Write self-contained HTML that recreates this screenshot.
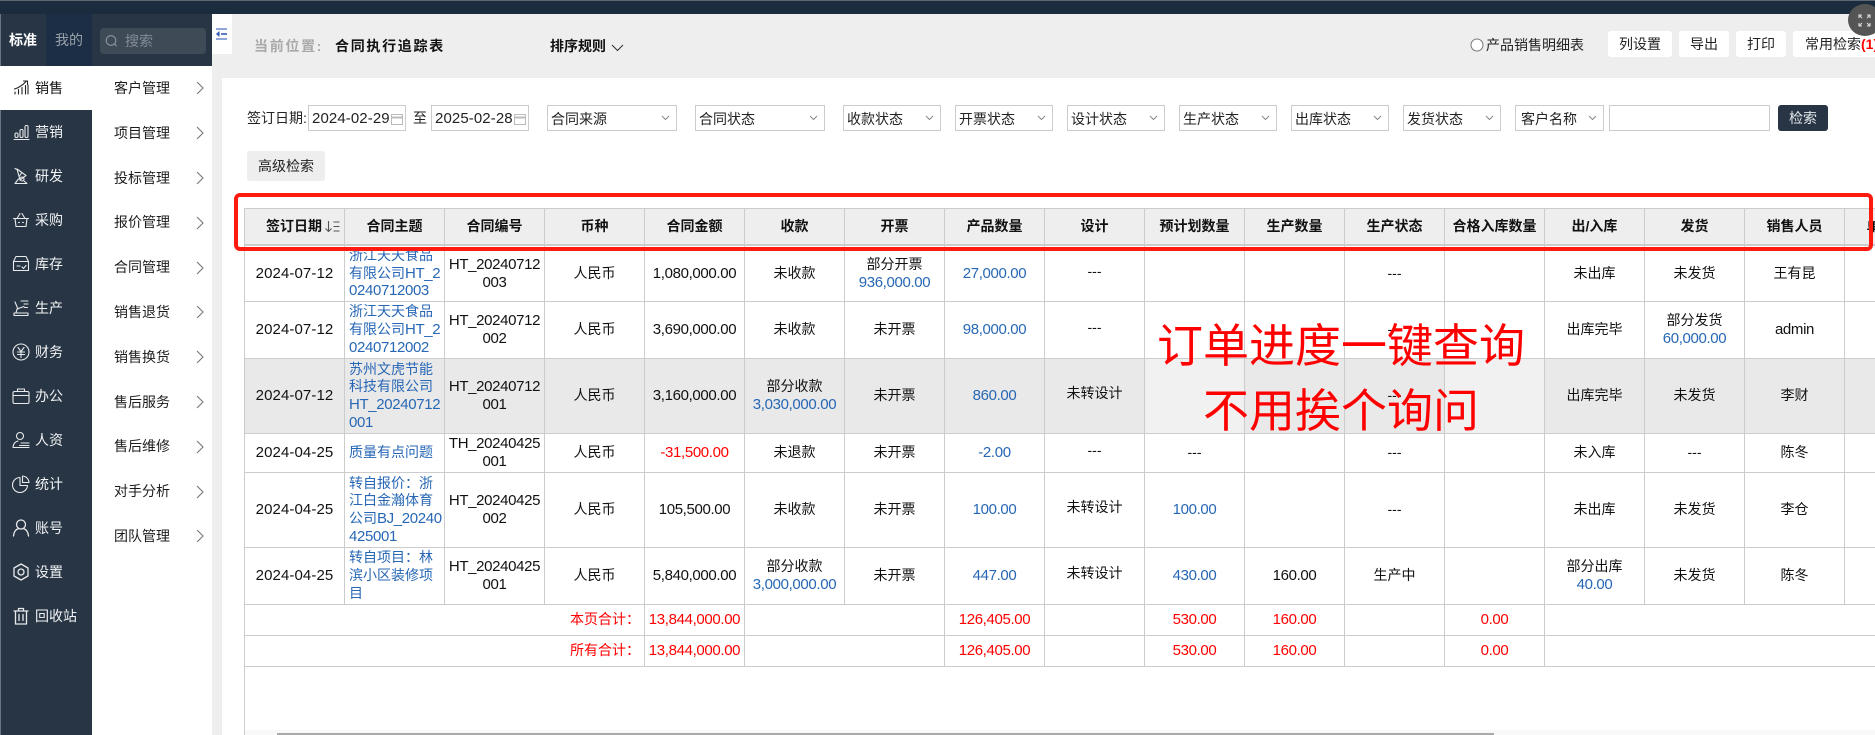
<!DOCTYPE html>
<html lang="zh"><head><meta charset="utf-8"><title>合同执行追踪表</title>
<style>
*{box-sizing:border-box;margin:0;padding:0}
html,body{width:1875px;height:735px;overflow:hidden;background:#fff}
body{position:relative;font:14px/18px "Liberation Sans","Noto Sans CJK SC",sans-serif;color:#111}
.a{position:absolute;white-space:nowrap}
.nav{position:absolute;left:35px;color:#f0f2f4;line-height:20px}
.ic{position:absolute;left:12px;width:18px;height:18px;fill:none;stroke:#e8eaec;stroke-width:1.1;stroke-linecap:round;stroke-linejoin:round}
.sub{position:absolute;left:114px;line-height:20px;color:#1c1c1c}
.chev{position:absolute;left:196px;width:8px;height:14px;fill:none;stroke:#777;stroke-width:1.1}
.box{position:absolute;top:105px;height:26px;background:#fff;border:1px solid #ccc;line-height:26px;padding-left:3px;white-space:nowrap;color:#222}
.box svg{position:absolute;right:6px;top:9px;width:9px;height:6px;fill:none;stroke:#888;stroke-width:1}
.btn{position:absolute;top:31px;height:26px;background:#fff;border-radius:3px;text-align:center;line-height:26px;color:#222;white-space:nowrap}
.d{font-size:15px;letter-spacing:.1px}.n{font-size:15px;letter-spacing:-.35px}
table{position:absolute;left:245px;top:209px;width:1700px;table-layout:fixed;border-collapse:separate;border-spacing:0}
col{width:100px}
th,td{border-right:1px solid #ccc;border-bottom:1px solid #ccc;text-align:center;vertical-align:middle;white-space:nowrap;padding:0;line-height:17.67px;overflow:hidden}
th{background:#eee;font-weight:700;border-bottom:2px solid #ccc;color:#111}
td.l{text-align:left;padding-left:4px}
.u{position:relative;top:-2px}
.b{color:#2767b5}.r{color:#f00}
tr.g td{background:#e9e9e9}tr.g td.w{background:#f1f1f1}
td.t{text-align:right;padding-right:4px;color:#f00}
</style></head><body>

<div class="a" style="left:0;top:0;width:1875px;height:14px;background:#1b2c3e;border-top:1px solid #5d6873"></div>
<div class="a" style="left:212px;top:14px;width:1663px;height:721px;background:#eee"></div>
<div class="a" style="left:222px;top:78px;width:1653px;height:657px;background:#fff"></div>

<!-- left rail -->
<div class="a" style="left:0;top:14px;width:92px;height:721px;background:#283544;border-left:1px solid #6b7580"></div>
<div class="a" style="left:92px;top:14px;width:120px;height:721px;background:#fff"></div>
<div class="a" style="left:0;top:14px;width:212px;height:52px;background:#283544;border-left:1px solid #6b7580"></div>
<div class="a" style="left:46px;top:14px;width:46px;height:52px;background:#1b2e45"></div>
<div class="a" style="left:9px;top:31px;color:#fff;font-weight:700">标准</div>
<div class="a" style="left:55px;top:31px;color:#9aa1a8">我的</div>
<div class="a" style="left:100px;top:28px;width:106px;height:26px;background:#3f4a57;border-radius:4px"></div>
<svg class="a" style="left:105px;top:34px;width:13px;height:14px;fill:none;stroke:#8d959e;stroke-width:1.1" viewBox="0 0 13 14"><circle cx="6" cy="6.5" r="4.8"/><path d="M9.6 10.2l2 2"/></svg>
<div class="a" style="left:125px;top:32px;color:#838c96">搜索</div>
<div class="a" style="left:0;top:66px;width:92px;height:44px;background:#fff"></div>

<!-- nav -->
<svg class="ic" style="top:79px;stroke:#222" viewBox="0 0 18 18"><path d="M3 15v-2M6.5 15v-4.5M10 15V8.5M13.500 15V6.500M16 15V6M2.500 10Q9 8 14 2.500M11.500 2h4v3.500"/></svg>
<div class="nav" style="top:78px;color:#111">销售</div>
<svg class="ic" style="top:123px" viewBox="0 0 18 18"><path d="M2 16.500h15"/><rect x="3" y="10" width="3" height="4.500" rx="1.200"/><rect x="8" y="6.500" width="3" height="8" rx="1.200"/><rect x="13" y="2.500" width="3" height="12" rx="1.200"/></svg>
<div class="nav" style="top:122px">营销</div>
<svg class="ic" style="top:167px" viewBox="0 0 18 18"><path d="M5 2l9 6.500-6 4.500zM9.500 6l-2 3M6 3L3 1.500M6.500 12L3 16.500h12l-3-2.500"/><circle cx="10" cy="12" r="2"/></svg>
<div class="nav" style="top:166px">研发</div>
<svg class="ic" style="top:211px" viewBox="0 0 18 18"><path d="M1.500 7.500h15M3 7.500l1 8h10l1-8M5 7.500L8 2.500M13 7.500L10 2.500M6.500 11.500h1M10.500 11.500h1"/></svg>
<div class="nav" style="top:210px">采购</div>
<svg class="ic" style="top:255px" viewBox="0 0 18 18"><path d="M4 1.500h10l2.500 5v9h-15v-9zM1.500 6.500h15M5 11h3M10 12l1.500 1.500L14 10.500"/></svg>
<div class="nav" style="top:254px">库存</div>
<svg class="ic" style="top:299px" viewBox="0 0 18 18"><path d="M2 16.500h14v-2.500H2zM4 14l1-4 7-2.500M3 3l3 7M9 2h7M12 5h4M12.500 8.500h3"/></svg>
<div class="nav" style="top:298px">生产</div>
<svg class="ic" style="top:343px" viewBox="0 0 18 18"><circle cx="9" cy="9" r="8"/><path d="M6 4.500L9 8.500l3-4M5.500 9h7M5.500 11.500h7M9 8.500V14.500"/></svg>
<div class="nav" style="top:342px">财务</div>
<svg class="ic" style="top:387px" viewBox="0 0 18 18"><rect x="1" y="4.500" width="16" height="12" rx="1.500"/><path d="M5.500 4.500V2h7v2.500M1 8.500h16"/></svg>
<div class="nav" style="top:386px">办公</div>
<svg class="ic" style="top:431px" viewBox="0 0 18 18"><circle cx="8" cy="5" r="3.500"/><path d="M1 16.500q.5-5.500 5-6.500M9 12h8M7.500 14.500h9.500M1 16.500h16"/></svg>
<div class="nav" style="top:430px">人资</div>
<svg class="ic" style="top:475px" viewBox="0 0 18 18"><path d="M8 2.500a7.500 7.500 0 1 0 7.500 8H8zM10.500 1a7 7 0 0 1 6.500 6.500h-6.500z"/></svg>
<div class="nav" style="top:474px">统计</div>
<svg class="ic" style="top:519px;stroke-width:1.300" viewBox="0 0 18 18"><circle cx="9" cy="5.500" r="4.500"/><path d="M1.500 17q.5-6 5-7.500M16.500 17q-.5-6-5-7.500"/></svg>
<div class="nav" style="top:518px">账号</div>
<svg class="ic" style="top:563px;stroke-width:1.300" viewBox="0 0 18 18"><path d="M9 1l7 4v8l-7 4-7-4V5z"/><circle cx="9" cy="9" r="3"/></svg>
<div class="nav" style="top:562px">设置</div>
<svg class="ic" style="top:607px;stroke-width:1.300" viewBox="0 0 18 18"><path d="M2 4h14M6.500 4V1.500h5V4M3.500 4v13h11V4M7 7.500v6M11 7.500v6"/></svg>
<div class="nav" style="top:606px">回收站</div>

<!-- sub menu -->
<div class="sub" style="top:78px">客户管理</div>
<div class="sub" style="top:123px">项目管理</div>
<div class="sub" style="top:168px">投标管理</div>
<div class="sub" style="top:212px">报价管理</div>
<div class="sub" style="top:257px">合同管理</div>
<div class="sub" style="top:302px">销售退货</div>
<div class="sub" style="top:347px">销售换货</div>
<div class="sub" style="top:392px">售后服务</div>
<div class="sub" style="top:436px">售后维修</div>
<div class="sub" style="top:481px">对手分析</div>
<div class="sub" style="top:526px">团队管理</div>
<svg class="chev" style="top:81px" viewBox="0 0 8 14"><path d="M1 1l6 6-6 6"/></svg>
<svg class="chev" style="top:126px" viewBox="0 0 8 14"><path d="M1 1l6 6-6 6"/></svg>
<svg class="chev" style="top:171px" viewBox="0 0 8 14"><path d="M1 1l6 6-6 6"/></svg>
<svg class="chev" style="top:216px" viewBox="0 0 8 14"><path d="M1 1l6 6-6 6"/></svg>
<svg class="chev" style="top:261px" viewBox="0 0 8 14"><path d="M1 1l6 6-6 6"/></svg>
<svg class="chev" style="top:305px" viewBox="0 0 8 14"><path d="M1 1l6 6-6 6"/></svg>
<svg class="chev" style="top:350px" viewBox="0 0 8 14"><path d="M1 1l6 6-6 6"/></svg>
<svg class="chev" style="top:395px" viewBox="0 0 8 14"><path d="M1 1l6 6-6 6"/></svg>
<svg class="chev" style="top:440px" viewBox="0 0 8 14"><path d="M1 1l6 6-6 6"/></svg>
<svg class="chev" style="top:485px" viewBox="0 0 8 14"><path d="M1 1l6 6-6 6"/></svg>
<svg class="chev" style="top:529px" viewBox="0 0 8 14"><path d="M1 1l6 6-6 6"/></svg>

<!-- collapse -->
<div class="a" style="left:212px;top:14px;width:20px;height:40px;background:#fff"></div>
<svg class="a" style="left:216px;top:28px;width:12px;height:12px" viewBox="0 0 12 12"><rect x="0" y="0" width="11" height="2" fill="#8ea6d8"/><rect x="0" y="10" width="11" height="2" fill="#8ea6d8"/><rect x="5" y="5" width="6" height="2" fill="#5d7fc6"/><path d="M0 6l3.500-3v6z" fill="#2d58b0"/></svg>

<!-- header bar -->
<div class="a" style="left:254px;top:37px;color:#a9a9a9;font-weight:700;letter-spacing:1.700px">当前位置:</div>
<div class="a" style="left:335px;top:37px;color:#111;font-weight:700;letter-spacing:1.700px">合同执行追踪表</div>
<div class="a" style="left:550px;top:37px;color:#111;font-weight:700">排序规则</div>
<svg class="a" style="left:611px;top:44px;width:13px;height:8px;fill:none;stroke:#333;stroke-width:1.100" viewBox="0 0 13 8"><path d="M1 1l5.500 5.500L12 1"/></svg>
<svg class="a" style="left:1470px;top:38px;width:14px;height:14px" viewBox="0 0 14 14"><circle cx="7" cy="7" r="6" fill="#fff" stroke="#777"/></svg>
<div class="a" style="left:1486px;top:36px;color:#222">产品销售明细表</div>
<div class="btn" style="left:1608px;width:64px">列设置</div>
<div class="btn" style="left:1679px;width:50px">导出</div>
<div class="btn" style="left:1736px;width:50px">打印</div>
<div class="btn" style="left:1793px;width:90px;text-align:left;padding-left:12px">常用检索<span style="color:#f00;font-weight:700">(1)</span></div>
<div class="a" style="left:1848px;top:4px;width:34px;height:32px;background:#555;border-radius:50%"></div>
<svg class="a" style="left:1858px;top:14px;width:13px;height:13px;fill:none;stroke:#ddd;stroke-width:1.100" viewBox="0 0 13 13"><path d="M1 4V1h3M1 1l3 3M12 4V1H9M12 1L9 4M1 9v3h3M1 12l3-3M12 9v3H9M12 12L9 9"/></svg>

<!-- filters -->
<div class="a" style="left:247px;top:109px;color:#222">签订日期:</div>
<div class="box" style="left:308px;width:98px;line-height:24px"><span class="d">2024-02-29</span>
<svg style="right:2px;top:7px;width:12px;height:12px;stroke:#bbb" viewBox="0 0 12 12"><rect x=".5" y="1.500" width="11" height="10"/><path d="M.5 4.500h11" stroke-width="2"/></svg></div>
<div class="a" style="left:413px;top:109px;color:#222">至</div>
<div class="box" style="left:431px;width:98px;line-height:24px"><span class="d">2025-02-28</span>
<svg style="right:2px;top:7px;width:12px;height:12px;stroke:#bbb" viewBox="0 0 12 12"><rect x=".5" y="1.500" width="11" height="10"/><path d="M.5 4.500h11" stroke-width="2"/></svg></div>
<div class="box" style="left:547px;width:130px">合同来源<svg viewBox="0 0 9 6"><path d="M1 1l3.500 3.500L8 1"/></svg></div>
<div class="box" style="left:695px;width:130px">合同状态<svg viewBox="0 0 9 6"><path d="M1 1l3.500 3.500L8 1"/></svg></div>
<div class="box" style="left:843px;width:98px">收款状态<svg viewBox="0 0 9 6"><path d="M1 1l3.500 3.500L8 1"/></svg></div>
<div class="box" style="left:955px;width:98px">开票状态<svg viewBox="0 0 9 6"><path d="M1 1l3.500 3.500L8 1"/></svg></div>
<div class="box" style="left:1067px;width:98px">设计状态<svg viewBox="0 0 9 6"><path d="M1 1l3.500 3.500L8 1"/></svg></div>
<div class="box" style="left:1179px;width:98px">生产状态<svg viewBox="0 0 9 6"><path d="M1 1l3.500 3.500L8 1"/></svg></div>
<div class="box" style="left:1291px;width:98px">出库状态<svg viewBox="0 0 9 6"><path d="M1 1l3.500 3.500L8 1"/></svg></div>
<div class="box" style="left:1403px;width:98px">发货状态<svg viewBox="0 0 9 6"><path d="M1 1l3.500 3.500L8 1"/></svg></div>
<div class="box" style="left:1515px;width:89px;padding-left:5px">客户名称<svg viewBox="0 0 9 6"><path d="M1 1l3.500 3.500L8 1"/></svg></div>
<div class="box" style="left:1609px;width:161px"></div>
<div class="a" style="left:1778px;top:105px;width:50px;height:26px;background:#283544;color:#e4e8ec;border-radius:3px;text-align:center;line-height:26px">检索</div>
<div class="a" style="left:247px;top:151px;width:78px;height:30px;background:#eee;border-radius:3px;text-align:center;line-height:30px;color:#222">高级检索</div>

<!-- table -->
<div class="a" style="left:244px;top:208px;width:1px;height:527px;background:#ccc"></div>
<div class="a" style="left:244px;top:208px;width:1631px;height:1px;background:#ccc"></div>
<table>
<colgroup><col><col><col><col><col><col><col><col><col><col><col><col><col><col><col><col><col></colgroup>
<tr style="height:37px">
<th style="text-align:left;padding-left:21px">签订日期<svg style="vertical-align:-2px;margin-left:2px" width="16" height="13" viewBox="0 0 16 13" fill="none" stroke="#555" stroke-width="1.100"><path d="M4.500 1v10.500M1.500 8.500l3 3 3-3M9.500 2h6M9.500 6.500h6M9.500 11h6"/></svg></th>
<th>合同主题</th><th>合同编号</th><th>币种</th><th>合同金额</th><th>收款</th><th>开票</th><th>产品数量</th><th>设计</th><th>预计划数量</th><th>生产数量</th><th>生产状态</th><th>合格入库数量</th><th>出/入库</th><th>发货</th><th>销售人员</th><th>单据状态</th></tr>

<tr style="height:56px">
<td><span class="d">2024-07-12</span></td>
<td class="l b">浙江天天食品<br>有限公司<span class="n">HT_2</span><br><span class="n">0240712003</span></td>
<td><span class="n">HT_20240712<br>003</span></td><td>人民币</td><td><span class="n">1,080,000.00</span></td><td>未收款</td>
<td>部分开票<br><span class="n b">936,000.00</span></td><td><span class="n b">27,000.00</span></td><td><span class="u">---</span></td><td></td><td></td><td>---</td><td></td><td>未出库</td><td>未发货</td><td>王有昆</td><td></td></tr>

<tr style="height:57px">
<td><span class="d">2024-07-12</span></td>
<td class="l b">浙江天天食品<br>有限公司<span class="n">HT_2</span><br><span class="n">0240712002</span></td>
<td><span class="n">HT_20240712<br>002</span></td><td>人民币</td><td><span class="n">3,690,000.00</span></td><td>未收款</td>
<td>未开票</td><td><span class="n b">98,000.00</span></td><td><span class="u">---</span></td><td></td><td></td><td>---</td><td></td><td>出库完毕</td><td>部分发货<br><span class="n b">60,000.00</span></td><td><span class="n">admin</span></td><td></td></tr>

<tr class="g" style="height:75px">
<td><span class="d">2024-07-12</span></td>
<td class="l b">苏州文虎节能<br>科技有限公司<br><span class="n">HT_20240712<br>001</span></td>
<td><span class="n">HT_20240712<br>001</span></td><td>人民币</td><td><span class="n">3,160,000.00</span></td><td>部分收款<br><span class="n b">3,030,000.00</span></td>
<td>未开票</td><td><span class="n b">860.00</span></td><td><span class="u">未转设计</span></td><td class="w"></td><td></td><td>---</td><td class="w"></td><td>出库完毕</td><td>未发货</td><td>李财</td><td></td></tr>

<tr style="height:39px">
<td><span class="d">2024-04-25</span></td>
<td class="l b">质量有点问题</td>
<td><span class="n">TH_20240425<br>001</span></td><td>人民币</td><td><span class="n r">-31,500.00</span></td><td>未退款</td>
<td>未开票</td><td><span class="n b">-2.00</span></td><td><span class="u">---</span></td><td>---</td><td></td><td>---</td><td></td><td>未入库</td><td>---</td><td>陈冬</td><td></td></tr>

<tr style="height:75px">
<td><span class="d">2024-04-25</span></td>
<td class="l b">转自报价：浙<br>江白金瀚体育<br>公司<span class="n">BJ_20240<br>425001</span></td>
<td><span class="n">HT_20240425<br>002</span></td><td>人民币</td><td><span class="n">105,500.00</span></td><td>未收款</td>
<td>未开票</td><td><span class="n b">100.00</span></td><td><span class="u">未转设计</span></td><td><span class="n b">100.00</span></td><td></td><td>---</td><td></td><td>未出库</td><td>未发货</td><td>李仓</td><td></td></tr>

<tr style="height:57px">
<td><span class="d">2024-04-25</span></td>
<td class="l b">转自项目：林<br>滨小区装修项<br>目</td>
<td><span class="n">HT_20240425<br>001</span></td><td>人民币</td><td><span class="n">5,840,000.00</span></td><td>部分收款<br><span class="n b">3,000,000.00</span></td>
<td>未开票</td><td><span class="n b">447.00</span></td><td><span class="u">未转设计</span></td><td><span class="n b">430.00</span></td><td><span class="n">160.00</span></td><td>生产中</td><td></td><td>部分出库<br><span class="n b">40.00</span></td><td>未发货</td><td>陈冬</td><td></td></tr>

<tr style="height:31px">
<td colspan="4" class="t">本页合计：</td><td><span class="n r">13,844,000.00</span></td><td colspan="2"></td><td><span class="n r">126,405.00</span></td><td></td><td><span class="n r">530.00</span></td><td><span class="n r">160.00</span></td><td></td><td><span class="n r">0.00</span></td><td colspan="4" style="border-right:0"></td></tr>
<tr style="height:31px">
<td colspan="4" class="t">所有合计：</td><td><span class="n r">13,844,000.00</span></td><td colspan="2"></td><td><span class="n r">126,405.00</span></td><td></td><td><span class="n r">530.00</span></td><td><span class="n r">160.00</span></td><td></td><td><span class="n r">0.00</span></td><td colspan="4" style="border-right:0"></td></tr>
</table>

<!-- scrollbar -->
<div class="a" style="left:245px;top:730px;width:1630px;height:5px;background:#f8f8f8"></div>
<div class="a" style="left:277px;top:733px;width:1217px;height:2px;background:#aaa"></div>

<!-- annotations -->
<div class="a" style="left:234px;top:193px;width:1639px;height:58px;border:4px solid #ff1a0f;border-radius:6px"></div>
<div class="a" style="left:1157px;top:323px;font-size:46px;line-height:46px;color:#f00">订单进度一键查询</div>
<div class="a" style="left:1203px;top:388px;font-size:46px;line-height:46px;color:#f00">不用挨个询问</div>
</body></html>
